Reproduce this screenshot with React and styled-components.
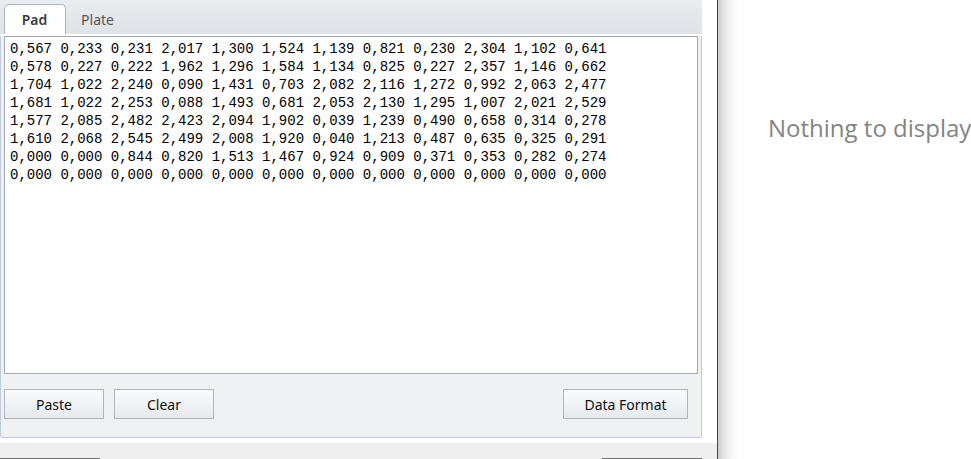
import React, { useState } from "react";
import styled, { createGlobalStyle } from "styled-components";

const GlobalStyle = createGlobalStyle`
  * { box-sizing: border-box; }
  body { margin: 0; background: #fff; font-family: "Noto Sans", "Open Sans", sans-serif; }
`;

const Layout = styled.div`
  display: flex;
  height: 100vh;
  overflow: hidden;
`;

const Dialog = styled.main`
  flex: 1;
  min-width: 0;
  display: flex;
  flex-direction: column;
  background: #fff;
  border-right: 1px solid #2b4482;
`;

const Panel = styled.section`
  flex: 1;
  min-height: 0;
  display: flex;
  flex-direction: column;
  margin: 0 15px 5px 0;
  background: #eff1f3;
  border: 1px solid #c0cad8;
  border-top: 0;
  border-radius: 0 0 3px 3px;
`;

const TabList = styled.div`
  display: flex;
  height: 36px;
  margin: 0 -1px;
  padding: 4px 4px 0;
  background: linear-gradient(#e9edf0, #dfe2e6);
  border-bottom: 2px solid #fff;
`;

const Tab = styled.button`
  width: ${(p) => (p.$wide ? "64px" : "62px")};
  padding: 0 1px 0 0;
  font: ${(p) => (p.$active ? 600 : 400)} 14px/20px "Noto Sans", sans-serif;
  color: ${(p) => (p.$active ? "#3c3c3c" : "#555")};
  background: ${(p) => (p.$active ? "#fff" : "transparent")};
  border: 1px solid ${(p) => (p.$active ? "#b0b5bc" : "transparent")};
  border-bottom: 0;
  border-radius: 5px 5px 0 0;
`;

const DataPad = styled.textarea`
  flex: 1;
  min-height: 0;
  margin: 0 3px;
  padding: 3px 5px;
  border: 1px solid #a3a9b3;
  border-radius: 0;
  outline: 0;
  resize: none;
  background: #fff;
  color: #000;
  font: 14px/18px "Liberation Mono", monospace;
  white-space: pre;
  overflow: auto;
`;

const Actions = styled.div`
  display: flex;
  gap: 10px;
  padding: 15px 13px 18px 3px;
`;

const ActionButton = styled.button`
  width: ${(p) => (p.$wide ? "125px" : "100px")};
  height: 30px;
  margin-left: ${(p) => (p.$end ? "auto" : "0")};
  padding: 2px 0 0;
  font: 14px/20px "Noto Sans", sans-serif;
  color: #111;
  background: linear-gradient(#f9fbfc, #e6eaed);
  border: 1px solid #b1b5b9;
`;

const Footer = styled.footer`
  display: flex;
  justify-content: space-between;
  align-items: flex-end;
  height: 16px;
  padding-right: 15px;
  background: #efefef;
`;

const FooterEdge = styled.div`
  width: 100px;
  height: 1px;
  background: #707070;
`;

const Preview = styled.aside`
  flex: 0 0 253px;
  padding: 111px 0 0 50px;
  overflow: hidden;
  background: linear-gradient(to right, #c9cdcd, #dedede 4px, #f0f0f0 10px, #fbfbfb 16px, #fff 22px);
`;

const EmptyMessage = styled.p`
  margin: 0;
  font: 24px/34px "Open Sans", "Noto Sans", sans-serif;
  color: #848484;
  white-space: nowrap;
`;

const READINGS = [
  "0,567 0,233 0,231 2,017 1,300 1,524 1,139 0,821 0,230 2,304 1,102 0,641",
  "0,578 0,227 0,222 1,962 1,296 1,584 1,134 0,825 0,227 2,357 1,146 0,662",
  "1,704 1,022 2,240 0,090 1,431 0,703 2,082 2,116 1,272 0,992 2,063 2,477",
  "1,681 1,022 2,253 0,088 1,493 0,681 2,053 2,130 1,295 1,007 2,021 2,529",
  "1,577 2,085 2,482 2,423 2,094 1,902 0,039 1,239 0,490 0,658 0,314 0,278",
  "1,610 2,068 2,545 2,499 2,008 1,920 0,040 1,213 0,487 0,635 0,325 0,291",
  "0,000 0,000 0,844 0,820 1,513 1,467 0,924 0,909 0,371 0,353 0,282 0,274",
  "0,000 0,000 0,000 0,000 0,000 0,000 0,000 0,000 0,000 0,000 0,000 0,000",
].join("\n");

export default function App() {
  const [tab, setTab] = useState("Pad");
  const [data, setData] = useState(READINGS);

  return (
    <>
      <GlobalStyle />
      <Layout>
        <Dialog>
          <Panel>
            <TabList role="tablist">
              {["Pad", "Plate"].map((name) => (
                <Tab
                  key={name}
                  type="button"
                  role="tab"
                  aria-selected={tab === name}
                  $active={tab === name}
                  $wide={name === "Plate"}
                  onClick={() => setTab(name)}
                >
                  {name}
                </Tab>
              ))}
            </TabList>
            <DataPad
              aria-label="Pad"
              spellCheck={false}
              value={data}
              onChange={(e) => setData(e.target.value)}
            />
            <Actions>
              <ActionButton type="button">Paste</ActionButton>
              <ActionButton type="button" onClick={() => setData("")}>Clear</ActionButton>
              <ActionButton type="button" $wide $end>Data Format</ActionButton>
            </Actions>
          </Panel>
          <Footer>
            <FooterEdge />
            <FooterEdge />
          </Footer>
        </Dialog>
        <Preview>
          <EmptyMessage>Nothing to display</EmptyMessage>
        </Preview>
      </Layout>
    </>
  );
}
